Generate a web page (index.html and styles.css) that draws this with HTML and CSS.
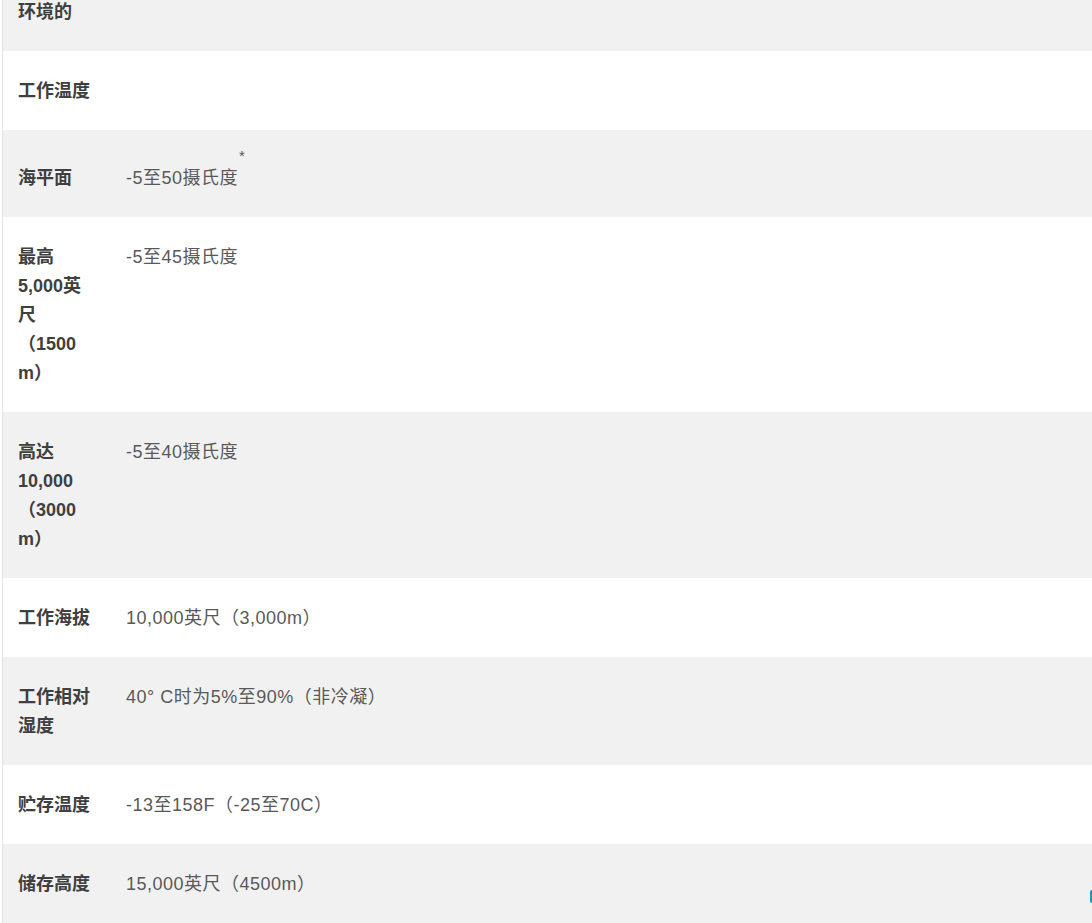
FILE: index.html
```html
<!DOCTYPE html>
<html lang="zh-CN">
<head>
<meta charset="utf-8">
<title>环境规格</title>
<link rel="stylesheet" href="styles.css">
</head>
<body>
<div class="spec">
  <table class="spec-table">
    <colgroup><col class="col-name"><col class="col-value"></colgroup>
    <tbody>
      <tr><td class="name">环境的</td><td class="value"></td></tr>
      <tr><td class="name">工作温度</td><td class="value"></td></tr>
      <tr><td class="name">海平面</td><td class="value">-5至50摄氏度<sup>*</sup></td></tr>
      <tr><td class="name">最高5,000英尺（1500m）</td><td class="value">-5至45摄氏度</td></tr>
      <tr><td class="name">高达10,000（3000m）</td><td class="value">-5至40摄氏度</td></tr>
      <tr><td class="name">工作海拔</td><td class="value">10,000英尺（3,000m）</td></tr>
      <tr><td class="name">工作相对湿度</td><td class="value">40° C时为5%至90%（非冷凝）</td></tr>
      <tr><td class="name">贮存温度</td><td class="value">-13至158F（-25至70C）</td></tr>
      <tr><td class="name">储存高度</td><td class="value">15,000英尺（4500m）</td></tr>
    </tbody>
  </table>
</div>
<div class="side-tab"></div>
</body>
</html>
```

FILE: styles.css
```css
html, body {
  margin: 0;
  padding: 0;
  background: #ffffff;
  overflow: hidden;
}

body {
  font-family: "Liberation Sans", "Noto Sans CJK SC", sans-serif;
  font-size: 18px;
  line-height: 29px;
}

.spec {
  margin: -28px 0 0 2px;
  border-left: 1px solid #e2e2e2;
  width: 1100px;
}

.spec-table {
  width: 100%;
  border-collapse: collapse;
  table-layout: fixed;
}

.col-name {
  width: 103px;
}

.spec-table tr:nth-child(odd) {
  background: #f1f1f1;
}

.spec-table td {
  vertical-align: baseline;
  padding: 26px 15px 24px 15px;
  overflow-wrap: anywhere;
}

.name {
  font-weight: bold;
  color: #3f3f3f;
}

.spec-table td.value {
  color: #595959;
  padding-left: 20px;
  letter-spacing: 0.5px;
}

.value sup {
  color: #555;
  font-size: 15px;
  line-height: 0;
  vertical-align: 23px;
  margin-left: 1px;
}

.side-tab {
  position: fixed;
  right: 0;
  bottom: 20px;
  width: 2px;
  height: 13px;
  background: #1f93c2;
  border-radius: 2px 0 0 2px;
}
```
